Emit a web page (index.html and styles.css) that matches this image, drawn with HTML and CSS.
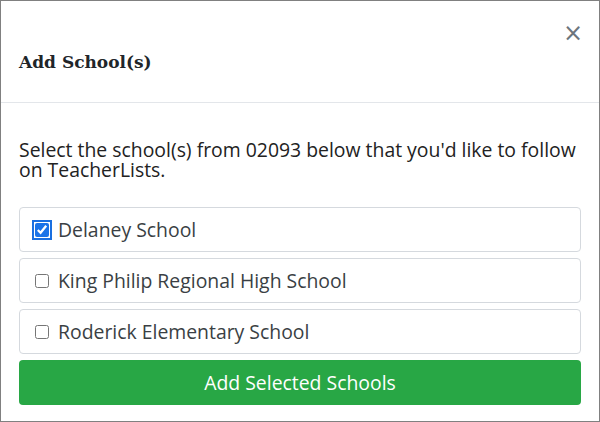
FILE: index.html
```html
<!DOCTYPE html>
<html lang="en">
<head>
  <meta charset="UTF-8">
  <meta name="viewport" content="width=device-width, initial-scale=1.0">
  <title>Add School(s)</title>
  <link rel="stylesheet" href="styles.css">
</head>
<body>
  <div class="modal">
    <div class="modal-header">
      <h2 class="modal-title">Add School(s)</h2>
      <button class="close" type="button">&times;</button>
    </div>

    <div class="modal-body">
      <p class="intro">Select the school(s) from 02093 below that you'd like to follow on TeacherLists.</p>

      <form class="school-form">
        <label class="school">
          <input type="checkbox" checked class="focused">
          <span>Delaney School</span>
        </label>
        <label class="school">
          <input type="checkbox">
          <span>King Philip Regional High School</span>
        </label>
        <label class="school">
          <input type="checkbox">
          <span>Roderick Elementary School</span>
        </label>

        <button type="submit" class="add-btn">Add Selected Schools</button>
      </form>
    </div>
  </div>
</body>
</html>
```

FILE: styles.css
```css
* {
  box-sizing: border-box;
}

body {
  margin: 0;
  font-family: 'Open Sans', sans-serif;
  color: #212529;
  background-color: #fff;
}

.modal {
  width: 600px;
  height: 422px;
  border: 1px solid #808080;
  overflow: hidden;
}

.modal-header {
  height: 102px;
  padding: 20px 16px 0 18px;
  display: flex;
  justify-content: space-between;
  align-items: flex-start;
  border-bottom: 1px solid #e3e6ea;
}

.modal-title {
  margin: 29px 0 0 0;
  font-family: 'DejaVu Serif', serif;
  font-size: 17px;
  font-weight: bold;
  line-height: 24px;
  color: #212529;
}

.close {
  background: none;
  border: none;
  padding: 0;
  font-family: 'DejaVu Sans', sans-serif;
  font-size: 24px;
  line-height: 24px;
  color: #6c757d;
  cursor: pointer;
}

.modal-body {
  padding: 0 18px;
}

.intro {
  margin: 37px 0 27px 0;
  font-size: 19.4px;
  line-height: 20px;
  color: #222;
}

.school-form {
  display: grid;
  gap: 6px;
}

.school {
  height: 45px;
  padding: 0 15px;
  display: flex;
  align-items: center;
  gap: 9px;
  border: 1px solid #d5d9de;
  border-radius: 4px;
  font-size: 19.4px;
  color: #3a3f44;
}

.school input {
  width: 14px;
  height: 14px;
  margin: 0;
  accent-color: #1a73e8;
}

.school input.focused {
  outline: 2px solid #1a6fe0;
  outline-offset: 1px;
  border-radius: 2px;
}

.add-btn {
  height: 45px;
  border: none;
  border-radius: 4px;
  background-color: #28a745;
  color: #fff;
  font-family: 'Open Sans', sans-serif;
  font-size: 19.4px;
  cursor: pointer;
}
```
